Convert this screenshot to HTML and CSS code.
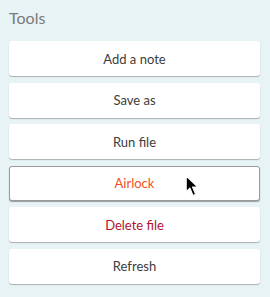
FILE: index.html
```html
<!DOCTYPE html>
<html lang="en">
<head>
  <meta charset="UTF-8" />
  <title>Tools</title>
  <link rel="stylesheet" href="styles.css">
</head>
<body>
<section class="tools">
  <h2>Tools</h2>
  <div class="list">
    <button class="btn">Add a note</button>
    <button class="btn">Save as</button>
    <button class="btn">Run file</button>
    <button class="btn hover warn">Airlock</button>
    <button class="btn danger">Delete file</button>
    <button class="btn">Refresh</button>
  </div>
</section>
<!-- mouse pointer over the hovered button -->
<svg class="cursor" width="15" height="23" viewBox="0 0 14 22">
  <path d="M1 1 L1 16 L4.5 12.5 L7.5 19.5 L10 18.5 L7 11.5 L12 11.5 Z" fill="#000" stroke="#fff" stroke-width="1" stroke-linejoin="round"/>
</svg>
</body>
</html>
```

FILE: styles.css
```css
* { margin: 0; padding: 0; box-sizing: border-box; }
html, body {
  width: 100%; height: 100%;
  background: #e8f3f6;
  font-family: 'Lato', sans-serif;
}
.tools { padding: 8px 10px 0 9px; }
.tools h2 {
  font-weight: 400; font-size: 16px; color: #7a7a7a;
  line-height: 20px; margin-bottom: 13px;
}
.list { display: flex; flex-direction: column; gap: 6.5px; }
.btn {
  height: 35px; width: 100%;
  background: #fff; border: 1px solid transparent; border-radius: 3px;
  box-shadow: 0 1px 1px rgba(0,0,0,0.28);
  font-family: 'Lato', sans-serif; font-size: 13px; color: #3d3d3d;
  cursor: pointer;
}
.btn.hover { border-color: #9a9a9a; box-shadow: 0 1px 1px rgba(0,0,0,0.35); }
.warn { color: #f4511e; }
.danger { color: #b3112e; }
.cursor { position: absolute; left: 185px; top: 175px; }
```
